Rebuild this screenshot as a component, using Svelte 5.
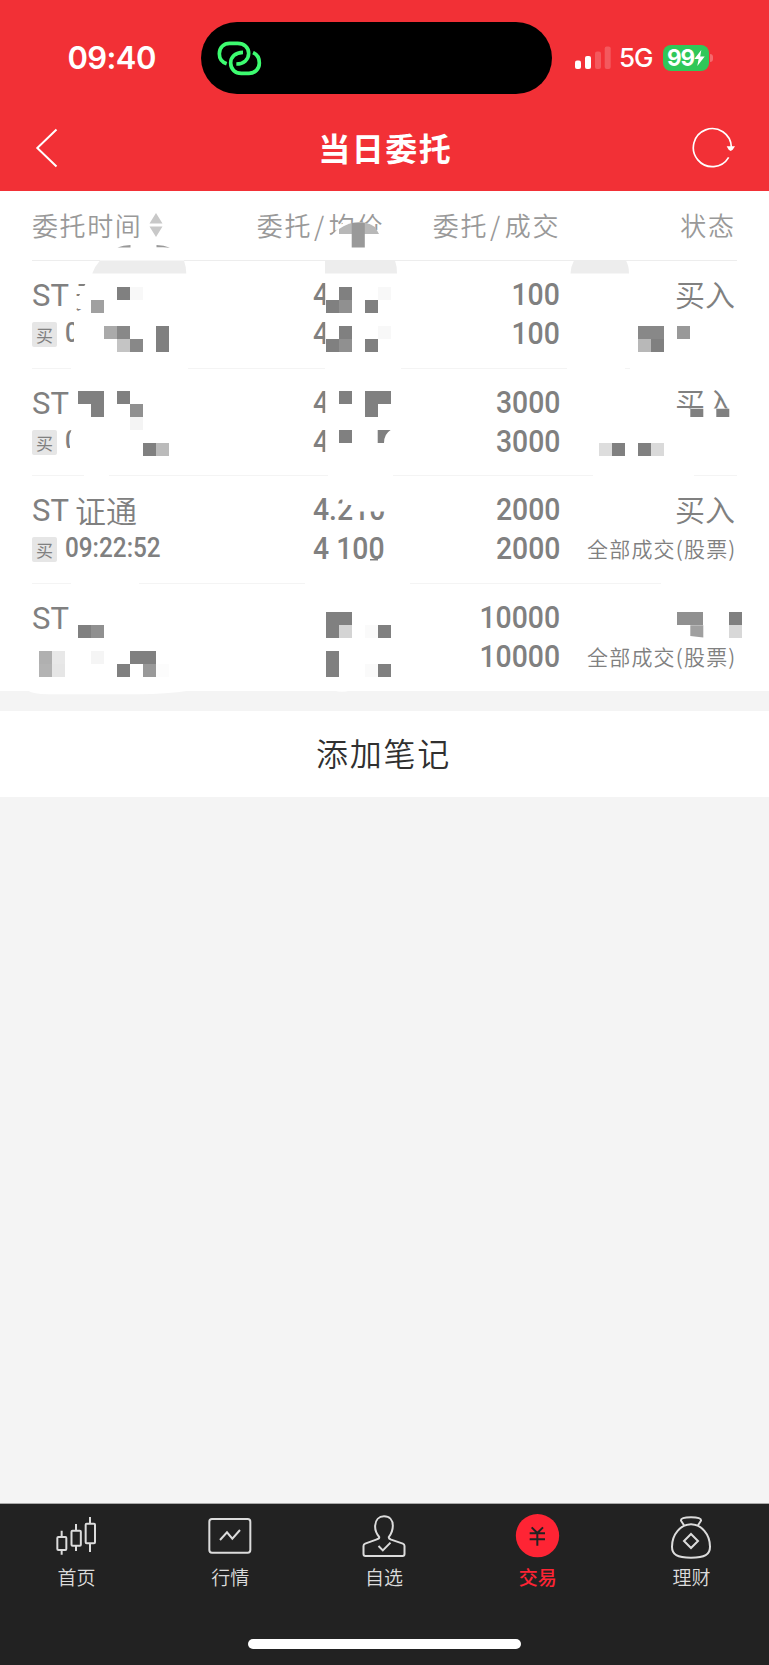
<script>
  const orders = [
    { name: 'ST', cjk: '无', tag: '买', time: '0', prices: ['4', '4'], amounts: ['100', '100'], side: '买入', status: '' },
    { name: 'ST', cjk: '', tag: '买', time: '0', prices: ['4', '4'], amounts: ['3000', '3000'], side: '买入', status: '' },
    { name: 'ST', cjk: '证通', tag: '买', time: '09:22:52', prices: ['4.210', '4 100'], amounts: ['2000', '2000'], side: '买入', status: '全部成交(股票)' },
    { name: 'ST', cjk: '', tag: '', time: '', prices: ['', ''], amounts: ['10000', '10000'], side: '', status: '全部成交(股票)' }
  ];

  // Mosaic cells: column, row, shade, on a square grid.
  const unit = 13.025;
  const d = '#808080', m = '#909090', f = '#f8f8f8';
  const cells = [
    [9, 22, d], [10, 22, f], [7, 23, '#a0a0a0'],
    [8, 25, '#aaaaaa'], [9, 25, '#888888'], [12, 25, d], [9, 26, '#c4c4c4'], [10, 26, '#888888'], [12, 26, d],
    [26, 22, d], [29, 22, f], [25, 23, d], [26, 23, m], [28, 23, d],
    [26, 25, d], [29, 25, f], [25, 26, d], [26, 26, m], [28, 26, d],
    [49, 25, '#888888'], [50, 25, '#888888'], [49, 26, '#b8b8b8'], [50, 26, d], [52, 25, '#999999'],
    [6, 30, d], [7, 30, d], [9, 30, d], [7, 31, d], [10, 31, m], [10, 32, '#f4f4f4'],
    [11, 34, d], [12, 34, '#bbbbbb'],
    [26, 30, d], [28, 30, d], [29, 30, d], [28, 31, d], [26, 33, d],
    [46, 34, '#dddddd'], [47, 34, d], [49, 34, d], [50, 34, '#dadada'],
    [6, 48, d], [7, 48, m],
    [3, 50, '#b0b0b0'], [4, 50, '#e8e8e8'], [3, 51, '#b3b3b3'], [4, 51, '#e6e6e6'],
    [7, 50, '#f5f5f5'], [10, 50, d], [11, 50, d], [9, 51, d], [11, 51, '#999999'], [12, 51, '#fcfcfc'],
    [25, 47, d], [26, 47, d], [25, 48, d], [26, 48, '#d4d4d4'], [28, 48, '#fafafa'], [29, 48, d],
    [25, 50, d], [25, 51, d], [28, 51, '#fafafa'], [29, 51, d],
    [52, 47, m], [53, 47, m], [56, 47, d], [56, 48, '#d8d8d8']
  ];
</script>

<div class="screen">
  <header>
    <div class="status-bar">
      <span class="clock">09:40</span>
      <div class="island">
        <svg width="47" height="38" viewBox="649 116 141 114" fill="none" stroke="#3dfc70" stroke-width="11">
          <path d="M681 190 C666 185 659 174 659 160 C659 142 672 129 690 129 H714 C733 129 747 141 747 159 C747 178 732 191 710 191" />
          <path d="M730 156 C707 156 693 170 693 188 C693 207 707 219 725 219 H748 C766 219 779 206 779 188 C779 173 772 162 760 157" />
        </svg>
      </div>
      <div class="signals">
        <svg width="36" height="24" viewBox="0 0 36 24" fill="#fff">
          <rect x="0" y="14.5" width="6" height="8.5" rx="2" />
          <rect x="10" y="10" width="6" height="13" rx="2" />
          <rect x="20" y="5.5" width="6" height="17.5" rx="2" opacity=".2" />
          <rect x="29.7" y="0.5" width="6" height="22.5" rx="2" opacity=".2" />
        </svg>
        <span class="net">5G</span>
        <span class="battery">99<svg width="11" height="16" viewBox="0 0 11 16"><path d="M7.3 0 L.3 9 H4.6 L3.3 16 L10.7 6.5 H6.2 Z" fill="#fff" /></svg></span>
        <i class="cap"></i>
      </div>
    </div>
    <nav>
      <svg width="24" height="40" viewBox="0 0 24 40" fill="none" stroke="#fff" stroke-width="2"><path d="M21.5 1.5 L2.3 20 L21.5 38.5" /></svg>
      <h1>当日委托</h1>
      <svg width="44" height="42" viewBox="923 378 132 126" fill="none" stroke="#fff" stroke-width="5">
        <path d="M1033 469 A57 57 0 1 1 1041 438" />
        <path d="M1027 436 H1052 L1045 446 L1039 450 L1033 446 Z" fill="#fff" stroke="none" />
      </svg>
    </nav>
  </header>

  <section class="list">
    <div class="grid head">
      <span class="sort">委托时间<svg width="14" height="24" viewBox="0 0 14 24" fill="#c8c8c8"><path d="M7 0 L13.5 10.5 H.5 Z M.5 13.5 H13.5 L7 24 Z" /></svg></span>
      <span>委托<b>/</b>均价</span>
      <span>委托<b>/</b>成交</span>
      <span>状态</span>
    </div>
    {#each orders as o}
      <div class="grid row">
        <div class="left">
          <span class="name">{o.name}{#if o.cjk}<b>{o.cjk}</b>{/if}</span>
          <span class="when">{#if o.tag}<em>{o.tag}</em>{/if}<span class="num time">{o.time}</span></span>
        </div>
        <div class="price">{#each o.prices as p}<span class="num">{p}</span>{/each}</div>
        <div class="amount">{#each o.amounts as a}<span class="num">{a}</span>{/each}</div>
        <div class="state"><span class="side">{o.side}</span><span class="done">{o.status}</span></div>
      </div>
    {/each}
    <svg class="mosaic" width="769" height="510" viewBox="0 191 769 510">
      <g fill="#fff">
        <path d="M333 234 L344 222 L356 226 V250 H333 Z M356 230 H379 L388 235 V250 H356 Z" />
        <path d="M100 257 H184 V264 H100 Z M87 281 L79 296 L78 309 H110 V281 Z M74 318 H110 V348 H74 Z" />
        <path d="M325.2 276 H400 V350 H325.2 Z M325.2 384 H400 V458 H325.2 Z" />
        <path d="M73.5 424 H110 V456 H70 V434 Z M64 448 H80 V458 H64 Z" />
        <path d="M672 408.5 H740 V424 H672 Z" />
        <path d="M336 487 H392 V499.500 H336 Z M342.500 499 H392 V505 H342.500 Z M356.500 504 H392 V511.500 H356.500 Z M336 503.500 H344 V509 H336 Z" />
        <path d="M71 366 H188 V371 H71 Z M325 366 H401 V371 H325 Z M567 366 H625 V371 H567 Z M630 366 H740 V371 H630 Z" />
        <path d="M84 474 H109 V479 H84 Z M328 474 H393 V479 H328 Z M593 474 H694 V479 H593 Z" />
        <path d="M71 581 H139 V586 H71 Z M305 581 H410 V586 H305 Z M661 581 H740 V586 H661 Z" />
        <path d="M28 690.5 Q33 694.3 48 694.3 H140 Q165 694.3 190 690.5 Z M334 690.5 Q342 693 350 690.5 Z" />
      </g>
      <path d="M100 260.5 H184 Q186 266 186.3 273.5 H92.3 Q95 266 100 260.5 Z M325 260.5 H395 Q397 266 397 273.5 H325 Z M574 260.5 H626 Q629 266 629 273.5 H570.5 Q571 266 574 260.5 Z" fill="#ededed" />
      <path d="M339 234 V229 Q358 216 375 227 L379 234 Z" fill="#b8b8b8" />
      <path d="M351.7 223 H364.8 V247.5 H351.7 Z" fill="#999" />
      <path d="M117.5 247.5 Q123 245 130.5 245 V247.5 Z M156.5 245 Q164 245 170 247.8 L163 247.3 H156.5 Z" fill="#999" />
      {#each cells as [cx, cy, shade]}
        <rect x={cx * unit} y={cy * unit} width={unit} height={unit} fill={shade} shape-rendering="crispEdges" />
      {/each}
      <path d="M690.3 408.7 H703.3 V417 H690.3 Z M716.3 408.7 H729.3 V417 H716.3 Z M377.7 430 H390.7 Q384 434 384 443 H377.7 Z" fill="#808080" />
      <path d="M690.3 625.2 H703.3 V637.5 L690.3 636 Z" fill="#a0a0a0" />
      <path d="M370 559 H378 V560.5 H370 Z" fill="#808080" />
    </svg>
  </section>

  <button>添加笔记</button>

  <footer>
    <div class="tabs">
      <div class="tab">
        <svg viewBox="159 69 144 144"><path d="M188 122 V140 M188 181 V194 M231 102 V121 M231 168 V183 M273 81 V100 M273 161 V186" /><rect x="175" y="141" width="27" height="39" rx="3" /><rect x="217.500" y="122" width="28" height="45" rx="3" /><rect x="260" y="101" width="28" height="59" rx="3" /></svg>
        <span>首页</span>
      </div>
      <div class="tab">
        <svg viewBox="620 69 144 144"><rect x="630" y="87" width="123" height="101" rx="8" /><path d="M662 150 L683 127 L699 146 L722 120" /></svg>
        <span>行情</span>
      </div>
      <div class="tab">
        <svg viewBox="1081.5 69 144 144"><path d="M1139 141 C1130 130 1126 119 1127 107 C1128 90 1138 79 1153.500 79 C1170 79 1180 90 1180 107 C1180 119 1176 130 1168 141 C1167 146 1171 147 1175 149 L1210 161 Q1215 163 1215 168 V192 Q1215 198 1209 198 H1098 Q1092 198 1092 192 V168 Q1092 163 1097 161 L1132 148 C1136 147 1140 145 1139 141 Z" /><path d="M1137 168 L1150 181 L1173 158" /></svg>
        <span>自选</span>
      </div>
      <div class="tab on">
        <svg viewBox="387 69 144 144"><circle cx="457.500" cy="137" r="65" fill="#fe2434" stroke="none" /><path d="M440 112 L457 129 L474 112 M457 129 V167 M434 130 H480 M434 148 H480" stroke="#222" /></svg>
        <span>交易</span>
      </div>
      <div class="tab">
        <svg viewBox="849 69 144 144"><path d="M897 106 L888 92 Q886 82 918 82 Q950 82 948 92 L939 106 M918 103 C887 103 861 133 861 170 C861 194 876 203 918 203 C960 203 975 194 975 170 C975 133 949 103 918 103 Z" /><path d="M918 132 L939 153 L918 174 L897 153 Z" /></svg>
        <span>理财</span>
      </div>
    </div>
    <div class="home"></div>
  </footer>
</div>

<style>
  :global(body) { margin: 0; }
  .screen { width: 769px; height: 1665px; display: flex; flex-direction: column; background: #f4f4f4; font-family: "Noto Sans CJK SC", sans-serif; overflow: hidden; }
  header { flex: none; height: 191px; background: #f23036; color: #fff; }
  .status-bar { height: 116px; display: grid; grid-template-columns: 201px 351px 1fr; align-items: center; font-family: Inter, sans-serif; }
  .clock { font-size: 31px; font-weight: 600; padding: 0 0 2px 67.500px; letter-spacing: -.6px; }
  .island { height: 72px; border-radius: 36px; background: #000; display: flex; align-items: center; box-sizing: border-box; padding-left: 15px; }
  .signals { display: flex; align-items: center; padding: 0 0 1px 23px; }
  .net { font-size: 26px; font-weight: 500; margin-left: 8px; width: 35px; letter-spacing: -1px; }
  .battery { margin-left: 9px; width: 46px; height: 26px; border-radius: 8px; background: #30c759; display: flex; align-items: center; justify-content: center; font-size: 22.500px; font-weight: 700; letter-spacing: -1px; }
  .cap { width: 3px; height: 8px; margin-left: 1px; border-radius: 0 4px 4px 0; background: #f5696d; }
  nav { height: 63px; display: grid; grid-template-columns: 60px 1fr 60px; align-items: center; justify-items: center; padding: 0 25px 0 17px; }
  h1 { margin: 0; font-size: 32px; font-weight: 700; letter-spacing: 1.500px; line-height: 40px; padding: 0 0 2px 9.500px; }
  .list { flex: none; position: relative; height: 500px; background: #fff; color: #808080; }
  .grid { display: grid; grid-template-columns: 200px 152px 176px 177px; margin: 0 32px; border-bottom: 1px solid #ededed; box-sizing: border-box; }
  .head { height: 70px; font-size: 26px; line-height: 68px; letter-spacing: 1.600px; color: #999; font-weight: 350; text-align: right; }
  .head span:first-child { text-align: left; }
  .head span:last-child { padding-right: 1.500px; }
  .head b { font-weight: 350; padding: 0 3px 0 2px; }
  .sort { display: flex; align-items: center; gap: 7px; height: 68px; }
  .row { height: 107.600px; border-color: #f4f4f4; }
  .row:last-of-type { border: 0; }
  .left, .price, .amount, .state { display: flex; flex-direction: column; padding-top: 14px; }
  .left > span, .num, .state > span { height: 39px; line-height: 39px; white-space: pre; }
  .price { padding-left: 81px; align-items: flex-start; }
  .amount { align-items: flex-end; }
  .state { align-items: flex-end; padding-top: 13px; }
  .num { font-family: Roboto, sans-serif; font-size: 31px; font-weight: 500; transform: scaleX(.915); transform-origin: right; }
  .price .num { transform-origin: left; }
  .left .name { display: flex; gap: 6px; font-family: Roboto, sans-serif; font-size: 31px; line-height: 41px; }
  .name b { font-family: "Noto Sans CJK SC", sans-serif; font-weight: 350; line-height: 40px; }
  .when { display: flex; align-items: center; gap: 8px; }
  em { font-style: normal; width: 25px; height: 25px; line-height: 25px; border-radius: 2px; background: #e6e6e6; font-size: 17px; text-align: center; margin-top: 2px; }
  .num.time { font-size: 27px; transform: scaleX(.9); transform-origin: left; }
  .side { font-size: 30px; padding-right: 2px; font-weight: 350; }
  .done { font-size: 21px; letter-spacing: 1.200px; padding: 1px .5px 0 0; font-weight: 350; }
  button { flex: none; margin: 20px 0 0; height: 86px; border: 0; background: #fff; color: #303030; font: 350 32px/83px "Noto Sans CJK SC", sans-serif; letter-spacing: 1.700px; padding: 0 2px 3px 0; }
  .mosaic { position: absolute; left: 0; top: 0; }
  footer { margin-top: auto; height: 162px; background: #222; border-top: 1px solid #aaa; box-sizing: border-box; color: #dcdcdc; }
  .tabs { display: grid; grid-template-columns: repeat(5, 1fr); height: 135px; }
  .tab { display: flex; flex-direction: column; align-items: center; padding: 9px 1px 0 0; font-size: 19px; line-height: 32px; font-weight: 350; }
  .tab svg { width: 48px; height: 48px; fill: none; stroke: #dcdcdc; stroke-width: 6; }
  .on { color: #fe2434; font-weight: 500; }
  .home { width: 273px; height: 10px; border-radius: 5px; background: #fff; margin: 0 auto; }
</style>
